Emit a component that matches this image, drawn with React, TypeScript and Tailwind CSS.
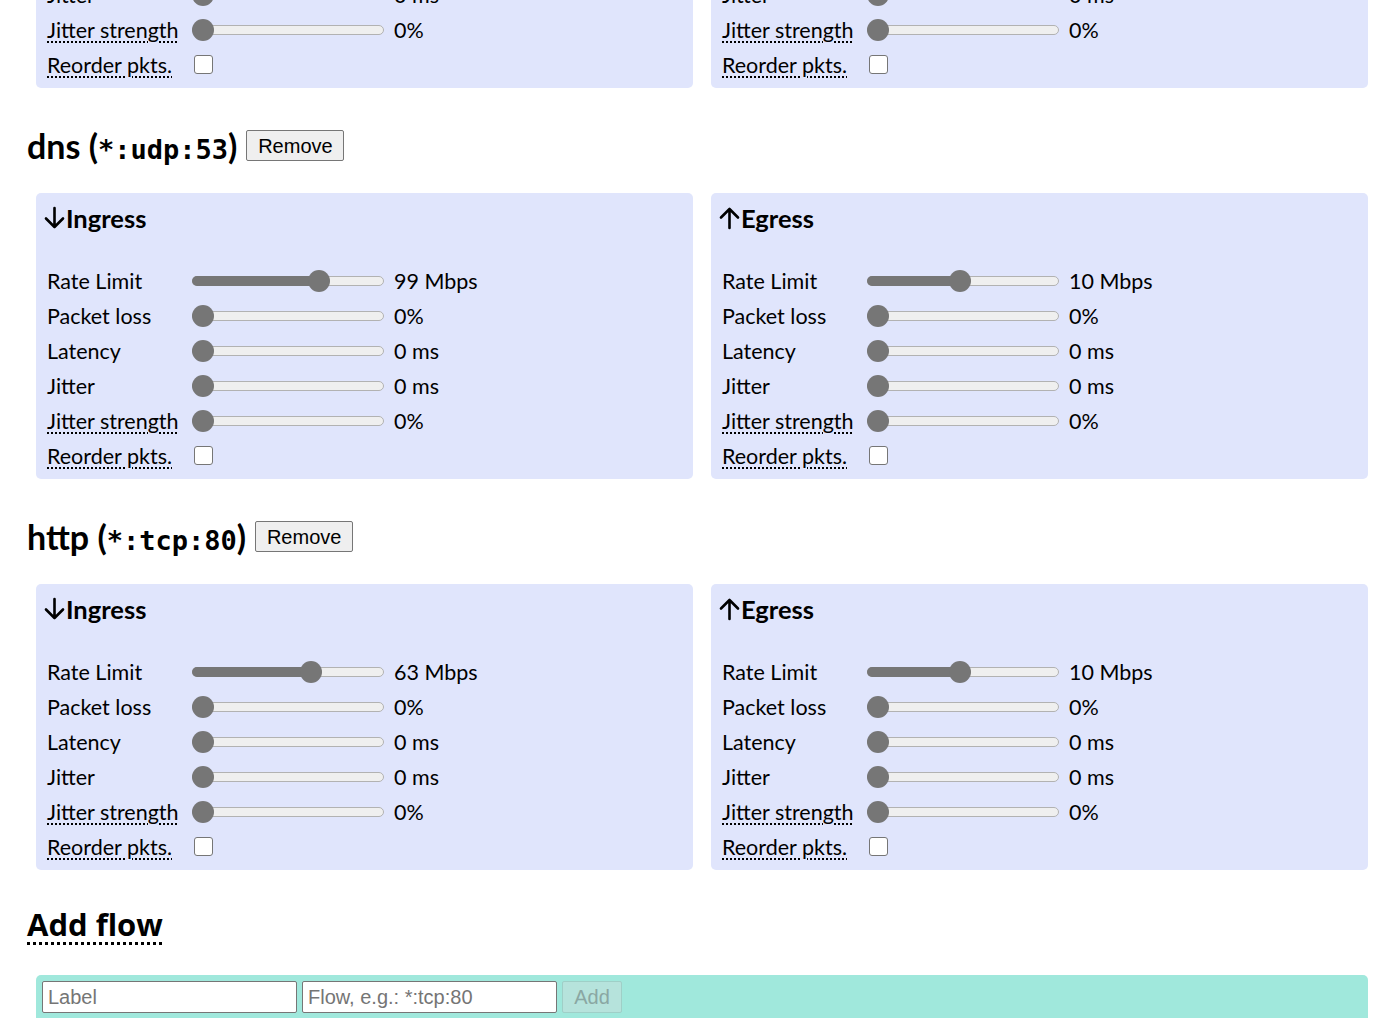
import React from 'react';

const BODY = "font-['Lato','Noto_Sans',sans-serif]";
const MONO = "font-['DejaVu_Sans_Mono','Liberation_Mono',monospace]";
const ARIAL = "font-['Liberation_Sans',Arial,sans-serif]";

interface Dir {
  rate: number;
  rateText: string;
}

interface Flow {
  name: string;
  spec: string;
  ingress: Dir;
  egress: Dir;
}

const flows: Flow[] = [
  { name: 'default', spec: '*', ingress: { rate: 0.68, rateText: '99 Mbps' }, egress: { rate: 0.48, rateText: '10 Mbps' } },
  { name: 'dns', spec: '*:udp:53', ingress: { rate: 0.68, rateText: '99 Mbps' }, egress: { rate: 0.48, rateText: '10 Mbps' } },
  { name: 'http', spec: '*:tcp:80', ingress: { rate: 0.635, rateText: '63 Mbps' }, egress: { rate: 0.48, rateText: '10 Mbps' } },
];

function Slider({ value }: { value: number }) {
  // thumb travels 170px over a 192px track
  const pos = 11 + value * 170;
  return (
    <div className="relative w-[192px] h-[22px]">
      <div className="absolute left-0 right-0 top-[6px] h-[10px] rounded-full border border-[#b2b2b2] bg-[#efefef]" />
      {value > 0 && (
        <div className="absolute left-0 top-[6px] h-[10px] rounded-l-full bg-[#767676]" style={{ width: pos }} />
      )}
      <div className="absolute top-0 w-[22px] h-[22px] rounded-full bg-[#767676]" style={{ left: pos - 11 }} />
    </div>
  );
}

function Arrow({ up }: { up: boolean }) {
  return (
    <svg width="21" height="24" viewBox="0 0 21 24" fill="none" stroke="black" strokeWidth="2.6" strokeLinecap="round" strokeLinejoin="round" className={up ? '' : 'rotate-180'}>
      <path d="M10.5 22V3M2 11.5L10.5 3L19 11.5" />
    </svg>
  );
}

function Row({ label, abbr, value, text }: { label: string; abbr?: boolean; value: number; text: string }) {
  return (
    <div className="flex items-center h-[35px]">
      <div className="w-[148px] pl-[3px] pt-[2px] shrink-0">
        <span className={abbr ? 'underline decoration-dotted decoration-2 underline-offset-[3px]' : ''}>{label}</span>
      </div>
      <Slider value={value} />
      <span className="ml-[10px] pt-[2px]">{text}</span>
    </div>
  );
}

function Panel({ title, up, dir }: { title: string; up: boolean; dir: Dir }) {
  return (
    <div className={`bg-[#e0e5fc] rounded-[5px] px-2 pt-[9px] pb-[6px] ${BODY} text-[21.5px] text-black`}>
      <div className="h-[32px] mb-[29px] flex items-center text-[25.5px] font-bold">
        <Arrow up={up} />
        <span className="ml-[1px]">{title}</span>
      </div>
      <Row label="Rate Limit" value={dir.rate} text={dir.rateText} />
      <Row label="Packet loss" value={0} text="0%" />
      <Row label="Latency" value={0} text="0 ms" />
      <Row label="Jitter" value={0} text="0 ms" />
      <Row label="Jitter strength" abbr value={0} text="0%" />
      <div className="flex items-center h-[35px]">
        <div className="w-[148px] pl-[3px] pt-[2px] shrink-0">
          <span className="underline decoration-dotted decoration-2 underline-offset-[3px]">Reorder pkts.</span>
        </div>
        <div className="ml-[2px] w-[19px] h-[19px] rounded-[3px] border border-[#767676] bg-white" />
      </div>
    </div>
  );
}

function Panels({ flow }: { flow: Flow }) {
  return (
    <div className="ml-[9px] grid grid-cols-2 gap-[18px]">
      <Panel title="Ingress" up={false} dir={flow.ingress} />
      <Panel title="Egress" up={true} dir={flow.egress} />
    </div>
  );
}

export default function App() {
  const [first, ...rest] = flows;
  return (
    <div className="h-[1018px] overflow-hidden bg-white text-black">
      <div className="pl-[27px] pr-[12px]">
        <div className="-mt-[198px]">
          <Panels flow={first} />
        </div>

        {rest.map((flow) => (
          <div key={flow.name}>
            <div className="mt-[42px] mb-[32px] h-[31px] flex items-center">
              <h2 className={`${BODY} text-[34px] font-bold leading-none`}>
                {flow.name} (<span className={`${MONO} text-[27px]`}>{flow.spec}</span>)
              </h2>
              <button className={`${ARIAL} ml-[9px] h-[31px] w-[98px] text-[20px] bg-[#efefef] border border-[#767676] rounded-[2px]`}>
                Remove
              </button>
            </div>
            <Panels flow={flow} />
          </div>
        ))}

        <div className="mt-[34px] h-[40px] flex items-center">
          <h2 className="font-['Open_Sans',sans-serif] text-[31px] font-bold leading-none underline decoration-dotted decoration-[3px] underline-offset-[6px]">
            Add flow
          </h2>
        </div>

        <div className="mt-[31px] ml-[9px] bg-[#a0e8dc] rounded-[5px] p-[6px] pb-[10px] flex gap-[5px]">
          <input
            placeholder="Label"
            className={`${ARIAL} w-[255px] h-[32px] px-[5px] text-[20px] bg-white border border-[#767676] rounded-[2px] placeholder:text-[#757575]`}
          />
          <input
            placeholder="Flow, e.g.: *:tcp:80"
            className={`${ARIAL} w-[255px] h-[32px] px-[5px] text-[20px] bg-white border border-[#767676] rounded-[2px] placeholder:text-[#757575]`}
          />
          <button
            disabled
            className={`${ARIAL} w-[60px] h-[32px] text-[20px] text-[#8aa7a3] bg-[#b6e3dc] border border-[#9fcfc7] rounded-[2px]`}
          >
            Add
          </button>
        </div>
      </div>
    </div>
  );
}
